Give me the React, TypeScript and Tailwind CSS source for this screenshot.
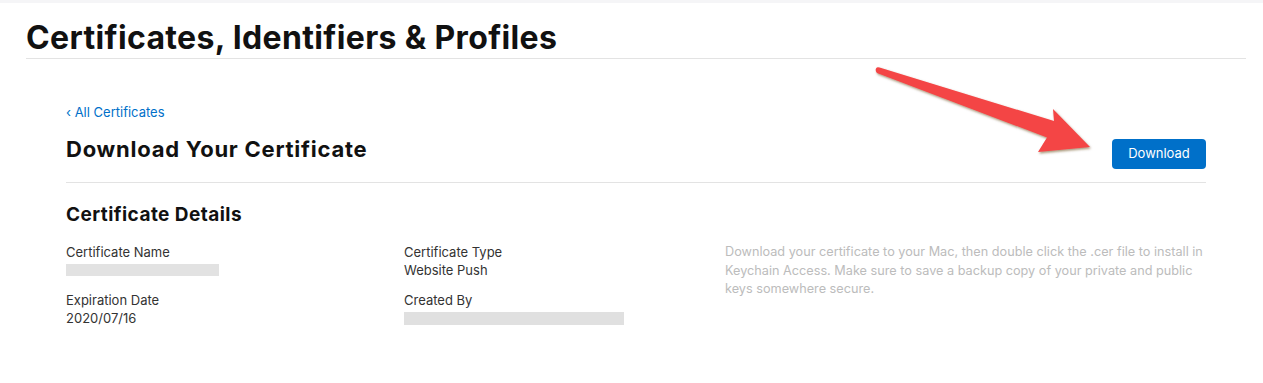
export default function App() {
  return (
    <div
      className="relative w-[1263px] h-[383px] bg-white overflow-hidden text-[#333]"
      style={{ fontFamily: "Inter, 'Liberation Sans', sans-serif" }}
    >
      <div className="h-[3px] bg-[#f5f5f7]" />
      <div className="px-[26px] pr-[17px]">
        {/* Page title */}
        <div className="pt-[18px] pb-[3px] border-b border-[#e3e3e3]">
          <h1 className="text-[32px] leading-[34px] font-bold text-[#111] tracking-[0.35px]">
            Certificates, Identifiers &amp; Profiles
          </h1>
        </div>

        <div className="px-[40px] pt-[44px]">
          <a href="#" className="block text-[13px] leading-[18px] text-[#0070c9]">
            ‹ All Certificates
          </a>

          <div className="flex items-start justify-between mt-[14px] pb-[13px] border-b border-[#e3e3e3]">
            <h2 className="text-[22px] leading-[28px] font-bold text-[#111] tracking-[0.75px]">
              Download Your Certificate
            </h2>
            <button className="mt-[4px] w-[94px] h-[30px] rounded-[4px] bg-[#0070c9] text-white text-[13px]">
              Download
            </button>
          </div>

          <h3 className="mt-[20px] text-[19px] leading-[24px] font-bold text-[#111] tracking-[0.45px]">
            Certificate Details
          </h3>

          <div className="flex mt-[16px] text-[13px] leading-[18px]">
            <div className="w-[338px]">
              <div>Certificate Name</div>
              <div className="h-[18px] flex items-center">
                <div className="w-[153px] h-[12px] bg-[#e2e2e2]" />
              </div>
              <div className="mt-[12px]">Expiration Date</div>
              <div>2020/07/16</div>
            </div>
            <div className="w-[321px]">
              <div>Certificate Type</div>
              <div>Website Push</div>
              <div className="mt-[12px]">Created By</div>
              <div className="h-[18px] flex items-center">
                <div className="w-[220px] h-[13px] bg-[#e0e0e0]" />
              </div>
            </div>
            <p className="flex-1 text-[12.7px] text-[#bcbcbc] leading-[18.5px]">
              Download your certificate to your Mac, then double click the .cer file to install in
              Keychain Access. Make sure to save a backup copy of your private and public keys
              somewhere secure.
            </p>
          </div>
        </div>
      </div>

      {/* Annotation arrow */}
      <svg
        className="absolute left-0 top-0 pointer-events-none"
        width="1263"
        height="383"
        viewBox="0 0 1263 383"
      >
        <defs>
          <filter id="sh" x="-10%" y="-10%" width="130%" height="130%">
            <feDropShadow dx="1" dy="1.5" stdDeviation="1" floodColor="#5a3a00" floodOpacity="0.55" />
          </filter>
        </defs>
        <path
          d="M876 68.5 Q877 66.5 879.5 67.5 L1054 121 L1053 109 L1090 147 L1038 152 L1047 137.5 L877 73 Q875 71 876 68.5 Z"
          fill="#f44545"
          filter="url(#sh)"
        />
      </svg>
    </div>
  );
}
